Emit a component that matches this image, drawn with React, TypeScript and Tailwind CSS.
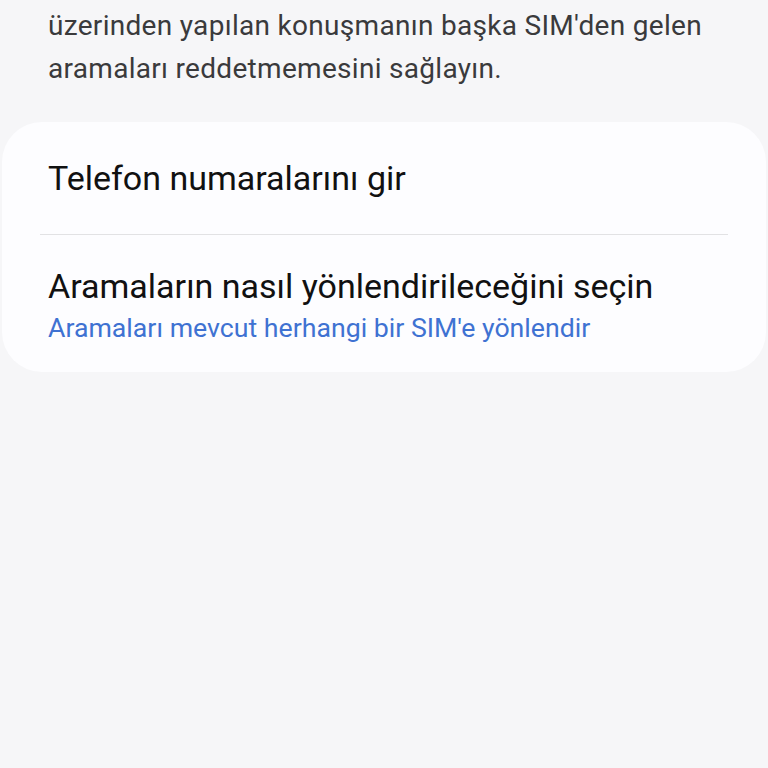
import React from "react"

type Row = {
  title: string
  subtitle?: string
}

const rows: Row[] = [
  { title: "Telefon numaralarını gir" },
  {
    title: "Aramaların nasıl yönlendirileceğini seçin",
    subtitle: "Aramaları mevcut herhangi bir SIM'e yönlendir",
  },
]

export default function App() {
  return (
    <div
      className="min-h-screen w-[768px] bg-[#f6f6f8]"
      style={{ fontFamily: "Roboto, 'Noto Sans', sans-serif" }}
    >
      {/* description text, continued from above */}
      <p className="px-12 pt-[4px] text-[28px] leading-[43px] tracking-[0.3px] text-[#3a3a3c]">
        üzerinden yapılan konuşmanın başka SIM'den gelen aramaları reddetmemesini sağlayın.
      </p>

      {/* settings card */}
      <div className="mt-[32px] mx-[2px] rounded-[40px] bg-[#fdfdff]">
        {rows.map((r, i) => (
          <div key={r.title}>
            {i > 0 && <div className="mx-[38px] h-px bg-[#e2e2e4]" />}
            <div className={i === 0 ? "px-[46px] pt-[36px] pb-[36px]" : "px-[46px] pt-[31px] pb-[28px]"}>
              <div className="text-[34px] leading-[40px] text-[#111]">{r.title}</div>
              {r.subtitle && (
                <div className="mt-[6px] text-[26.7px] leading-[32px] text-[#3f72d2]">{r.subtitle}</div>
              )}
            </div>
          </div>
        ))}
      </div>
    </div>
  )
}
